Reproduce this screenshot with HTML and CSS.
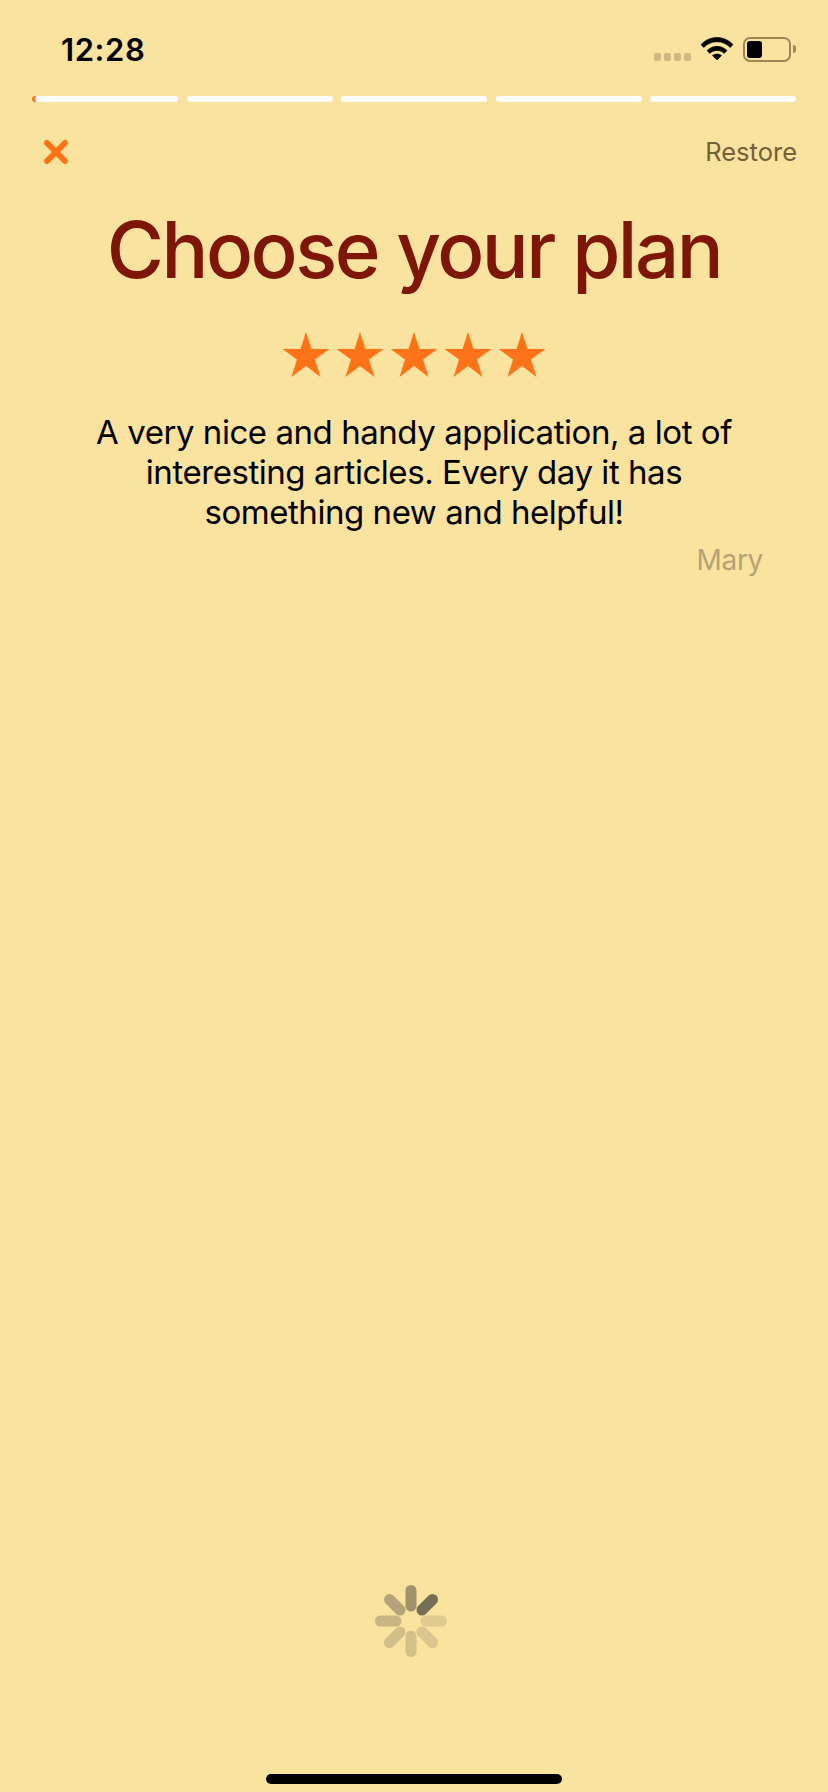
FILE: index.html
```html
<!DOCTYPE html>
<html lang="en">
<head>
<meta charset="utf-8">
<title>Choose your plan</title>
<link rel="stylesheet" href="styles.css">
</head>
<body>
<div class="screen">
  <header class="status">
    <span class="time">12:28</span>
    <div class="status-icons">
      <div class="signal"><i></i><i></i><i></i><i></i></div>
      <svg class="wifi" width="34" height="26" viewBox="0 0 34 26"><path d="M1 9.500C5.500 5 11 2.500 17 2.500S28.500 5 33 9.500L30.300 12.500C26.500 8.800 22 6.800 17 6.800S7.500 8.800 3.700 12.500Z M7 15.500C9.800 12.900 13.200 11.300 17 11.300S24.200 12.900 27 15.500L24.300 18.400C22.300 16.600 19.800 15.500 17 15.500S11.700 16.600 9.700 18.400Z M12.500 20.500C13.800 19.500 15.300 19 17 19S20.200 19.500 21.500 20.500L17 25Z"/></svg>
      <div class="battery"><div class="battery-fill"></div></div>
    </div>
  </header>
  <div class="progress">
    <div class="seg seg-first"></div><div class="seg"></div><div class="seg"></div><div class="seg"></div><div class="seg"></div>
  </div>
  <div class="nav">
    <svg class="close" width="26" height="26" viewBox="0 0 26 26"><path d="M4 4L22 22M22 4L4 22"/></svg>
    <span class="restore">Restore</span>
  </div>
  <h1 class="title">Choose your plan</h1>
  <div class="stars">
    <svg width="48" height="48" viewBox="0 0 48 48"><path d="M24 1L29.500 18H47.500L33 28.500L38.500 46L24 35L9.500 46L15 28.500L.5 18H18.500Z"/></svg>
    <svg width="48" height="48" viewBox="0 0 48 48"><path d="M24 1L29.500 18H47.500L33 28.500L38.500 46L24 35L9.500 46L15 28.500L.5 18H18.500Z"/></svg>
    <svg width="48" height="48" viewBox="0 0 48 48"><path d="M24 1L29.500 18H47.500L33 28.500L38.500 46L24 35L9.500 46L15 28.500L.5 18H18.500Z"/></svg>
    <svg width="48" height="48" viewBox="0 0 48 48"><path d="M24 1L29.500 18H47.500L33 28.500L38.500 46L24 35L9.500 46L15 28.500L.5 18H18.500Z"/></svg>
    <svg width="48" height="48" viewBox="0 0 48 48"><path d="M24 1L29.500 18H47.500L33 28.500L38.500 46L24 35L9.500 46L15 28.500L.5 18H18.500Z"/></svg>
  </div>
  <p class="review">A very nice and handy application, a lot of<br>interesting articles. Every day it has<br>something new and helpful!</p>
  <p class="author">Mary</p>
  <div class="spacer"></div>
  <div class="spinner-row">
    <svg class="spinner" width="72" height="72" viewBox="0 0 72 72">
      <line class="s0" x1="36" y1="5.500" x2="36" y2="21"/>
      <line class="s1" x1="57.500" y1="14.500" x2="47" y2="25"/>
      <line class="s2" x1="66.500" y1="36" x2="51" y2="36"/>
      <line class="s3" x1="57.500" y1="57.500" x2="47" y2="47"/>
      <line class="s4" x1="36" y1="66.500" x2="36" y2="51"/>
      <line class="s5" x1="14.500" y1="57.500" x2="25" y2="47"/>
      <line class="s6" x1="5.500" y1="36" x2="21" y2="36"/>
      <line class="s7" x1="14.500" y1="14.500" x2="25" y2="25"/>
    </svg>
  </div>
  <div class="home-row"><div class="home-bar"></div></div>
</div>
</body>
</html>
```
FILE: styles.css
```css
* { box-sizing: border-box; }
html, body { margin: 0; padding: 0; }
body { background: #fae29f; font-family: Inter, "Liberation Sans", sans-serif; }
.screen { width: 828px; height: 1792px; display: flex; flex-direction: column; background: #fae29f; overflow: hidden; }

.status { height: 96px; padding: 32px 37px 0 61px; display: flex; justify-content: space-between; align-items: flex-start; }
.time { font-size: 31px; line-height: 36px; font-weight: 600; color: #000; letter-spacing: 0.6px; }
.status-icons { display: flex; align-items: flex-start; padding-top: 5px; }
.signal { display: flex; gap: 2.500px; margin-top: 16px; margin-right: 9px; }
.signal i { width: 7.500px; height: 8px; border-radius: 2px; background: #cfb883; display: block; }
.wifi { display: block; fill: #000; stroke: #000; stroke-width: 0.6px; margin-right: 9px; margin-top: -2px; }
.battery { position: relative; width: 48px; height: 25px; border: 2px solid #9c8755; border-radius: 7px; padding: 2px; }
.battery::after { content: ""; position: absolute; right: -7px; top: 6px; width: 3px; height: 8px; background: #9c8755; border-radius: 0 3px 3px 0; }
.battery-fill { width: 15px; height: 100%; background: #000; border-radius: 3px; }

.progress { display: flex; gap: 8.500px; padding: 0 31.500px 0 32px; height: 6px; }
.seg { flex: 1; height: 6px; background: #fff; border-radius: 3px; }
.seg-first { box-shadow: inset 3px 0 0 #ff7318; }

.nav { display: flex; justify-content: space-between; align-items: center; padding: 0 31px 0 43px; margin-top: 33px; height: 34px; }
.close { display: block; fill: none; stroke: #ff7318; stroke-width: 6px; stroke-linecap: round; }
.restore { font-size: 25.500px; line-height: 34px; color: #736038; }

.title { margin: 33px 0 0; text-align: center; font-size: 78px; line-height: 96px; font-weight: 500; letter-spacing: -2.500px; color: #7e1607; }

.stars { display: flex; justify-content: center; gap: 6px; margin-top: 33px; }
.stars svg { display: block; fill: #ff7318; }

.review { margin: 33px 0 0; text-align: center; font-size: 33px; line-height: 40px; letter-spacing: -0.450px; color: #000; }
.author { margin: 8px 65px 0 0; text-align: right; font-size: 28px; line-height: 40px; letter-spacing: -0.300px; color: #b5a275; }

.spacer { flex: 1; }
.spinner-row { display: flex; justify-content: center; padding-right: 6px; }
.spinner { display: block; fill: none; stroke: #736c56; stroke-width: 11px; stroke-linecap: round; }
.s0 { opacity: 0.68; } .s1 { opacity: 0.98; } .s2 { opacity: 0.2; } .s3 { opacity: 0.24; }
.s4 { opacity: 0.28; } .s5 { opacity: 0.3; } .s6 { opacity: 0.38; } .s7 { opacity: 0.52; }

.home-row { display: flex; justify-content: center; padding-top: 117px; padding-bottom: 8px; }
.home-bar { width: 296px; height: 10px; background: #000; border-radius: 5px; }
```
